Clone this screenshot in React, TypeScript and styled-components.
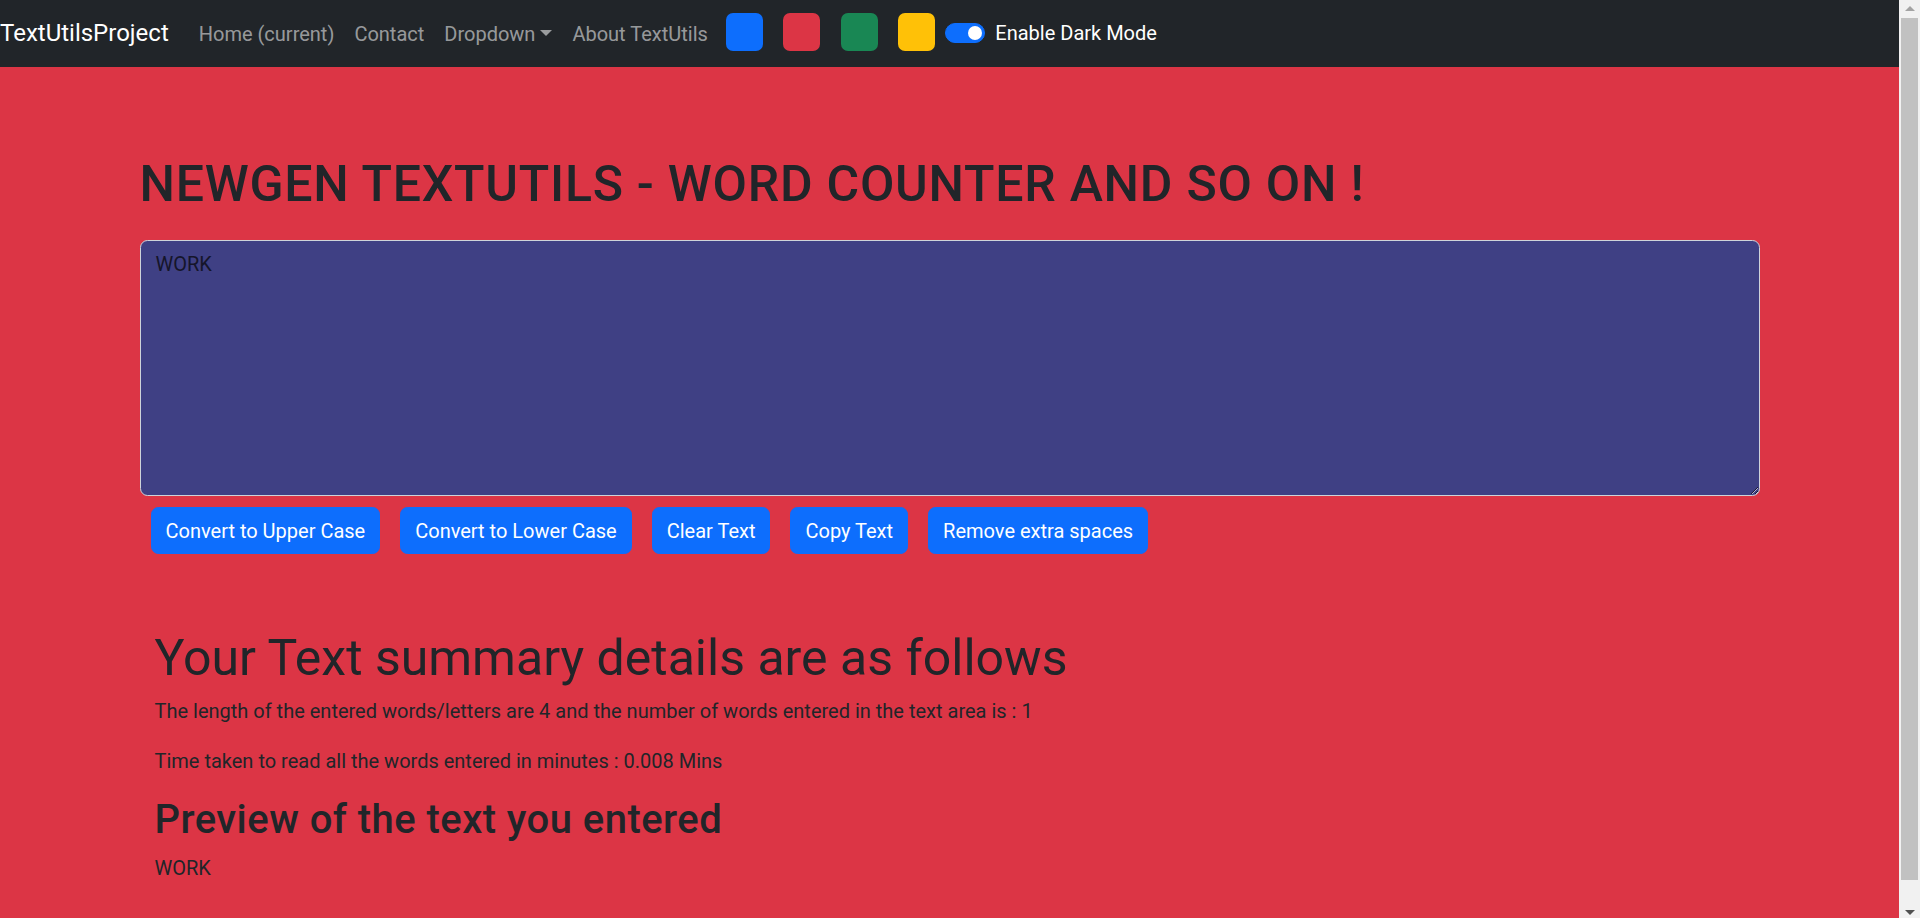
import React from "react";
import styled, { createGlobalStyle } from "styled-components";

const GlobalStyle = createGlobalStyle`
  html, body {
    margin: 0;
    padding: 0;
    height: 100%;
    overflow: hidden;
  }
  body {
    font-family: Roboto, "Liberation Sans", sans-serif;
    font-size: 20px;
    line-height: 30px;
    color: #212529;
  }
  #root {
    height: 100%;
  }
  * {
    box-sizing: border-box;
  }
`;

const Screen = styled.div`
  display: flex;
  height: 100vh;
  width: 100%;
`;

const Page = styled.div`
  flex: 1;
  display: flex;
  flex-direction: column;
  background: #dc3545;
  overflow: hidden;
`;

const Navbar = styled.nav`
  height: 67px;
  flex: none;
  display: flex;
  align-items: center;
  background: #212529;
`;

const Brand = styled.a`
  font-size: 24px;
  line-height: 36px;
  color: #fff;
  margin-right: 20px;
  text-decoration: none;
  margin-top: -1px;
`;

const NavList = styled.ul`
  display: flex;
  list-style: none;
  margin: 0;
  padding: 0;
`;

const NavLink = styled.li`
  padding: 0 10px;
  font-size: 20px;
  line-height: 30px;
  color: rgba(255, 255, 255, 0.55);
  white-space: nowrap;
  display: flex;
  align-items: center;
`;

const Caret = styled.span`
  display: inline-block;
  margin-left: 5px;
  margin-top: -2px;
  border-top: 6px solid rgba(255, 255, 255, 0.55);
  border-left: 6px solid transparent;
  border-right: 6px solid transparent;
  width: 0;
  height: 0;
`;

const Swatches = styled.div`
  display: flex;
  gap: 20.5px;
  margin-left: 8px;
  margin-bottom: 4px;
`;

const Swatch = styled.div<{ $color: string }>`
  width: 37px;
  height: 38px;
  border-radius: 7px;
  background: ${(p) => p.$color};
`;

const SwitchWrap = styled.label`
  display: flex;
  align-items: center;
  margin-left: 10px;
  gap: 10px;
  margin-bottom: 2px;
`;

const Toggle = styled.span`
  position: relative;
  width: 40px;
  height: 20px;
  border-radius: 10px;
  background: #0d6efd;
  border: 1px solid #0d6efd;
`;

const Knob = styled.span`
  position: absolute;
  right: 2px;
  top: 2px;
  width: 14px;
  height: 14px;
  border-radius: 50%;
  background: #fff;
`;

const SwitchLabel = styled.span`
  font-size: 20px;
  line-height: 30px;
  color: #fff;
`;

const Container = styled.main`
  width: 100%;
  max-width: 1650px;
  margin: 0 auto;
  padding: 87px 15px 0;
`;

const Title = styled.h1`
  margin: 0 0 26px;
  font-size: 50px;
  line-height: 60px;
  font-weight: 500;
  letter-spacing: 0.75px;
  color: #212529;
`;

const TextArea = styled.textarea`
  display: block;
  width: 100%;
  height: 256px;
  padding: 7.5px 15px;
  font-family: Roboto, "Liberation Sans", sans-serif;
  font-size: 20px;
  line-height: 30px;
  color: #15152a;
  background: #3f4084;
  border: 1.25px solid #ced4da;
  border-radius: 7.5px;
  outline: none;
  resize: vertical;
`;

const ButtonRow = styled.div`
  display: flex;
  gap: 20px;
  margin-top: 11px;
  padding-left: 11px;
`;

const ActionButton = styled.button`
  height: 47px;
  padding: 0 14px;
  font-family: Roboto, "Liberation Sans", sans-serif;
  font-size: 20px;
  line-height: 30px;
  color: #fff;
  background: #0d6efd;
  border: 1.25px solid #0d6efd;
  border-radius: 7.5px;
  cursor: pointer;
`;

const Summary = styled.section`
  margin-top: 74px;
  padding: 0 15px;
`;

const SummaryTitle = styled.h1`
  margin: 0 0 8px;
  font-size: 50px;
  line-height: 60px;
  font-weight: 400;
  color: #212529;
`;

const SubTitle = styled.h2`
  margin: 0 0 9px;
  font-size: 40px;
  line-height: 48px;
  font-weight: 500;
  letter-spacing: 0.45px;
  color: #212529;
`;

const Para = styled.p`
  margin: 0 0 20px;
  font-size: 20px;
  line-height: 30px;
`;

const Scrollbar = styled.div`
  width: 21px;
  flex: none;
  display: flex;
  flex-direction: column;
  align-items: center;
  background: #f1f1f1;
  padding: 0 2px;
`;

const ScrollArrow = styled.div<{ $down?: boolean }>`
  flex: none;
  height: 18px;
  width: 100%;
  display: flex;
  align-items: center;
  justify-content: center;
  &::before {
    content: "";
    width: 0;
    height: 0;
    border-left: 5px solid transparent;
    border-right: 5px solid transparent;
    ${(p) =>
      p.$down
        ? "border-top: 5px solid #505050; margin-top: 6px;"
        : "border-bottom: 5px solid #a3a3a3; margin-top: -2px;"}
  }
`;

const Thumb = styled.div`
  width: 100%;
  height: 862px;
  background: #c1c1c1;
`;

const Spacer = styled.div`
  flex: 1;
`;

const swatchColors = ["#0d6efd", "#dc3545", "#198754", "#ffc107"];
const actions = [
  "Convert to Upper Case",
  "Convert to Lower Case",
  "Clear Text",
  "Copy Text",
  "Remove extra spaces",
];

export default function App() {
  const text = "WORK";
  const words = text.split(/\s+/).filter((w) => w.length > 0).length;
  return (
    <>
      <GlobalStyle />
      <Screen>
        <Page>
          <Navbar>
            <Brand href="#">TextUtilsProject</Brand>
            <NavList>
              <NavLink>Home (current)</NavLink>
              <NavLink>Contact</NavLink>
              <NavLink>
                Dropdown
                <Caret />
              </NavLink>
              <NavLink>About TextUtils</NavLink>
            </NavList>
            <Swatches>
              {swatchColors.map((c) => (
                <Swatch key={c} $color={c} />
              ))}
            </Swatches>
            <SwitchWrap>
              <Toggle>
                <Knob />
              </Toggle>
              <SwitchLabel>Enable Dark Mode</SwitchLabel>
            </SwitchWrap>
          </Navbar>
          <Container>
            <Title>NEWGEN TEXTUTILS - WORD COUNTER AND SO ON !</Title>
            <TextArea rows={8} defaultValue={text} />
            <ButtonRow>
              {actions.map((a) => (
                <ActionButton key={a}>{a}</ActionButton>
              ))}
            </ButtonRow>
            <Summary>
              <SummaryTitle>Your Text summary details are as follows</SummaryTitle>
              <Para>
                The length of the entered words/letters are {text.length} and the number of words
                entered in the text area is : {words}
              </Para>
              <Para>Time taken to read all the words entered in minutes : {0.008 * words} Mins</Para>
              <SubTitle>Preview of the text you entered</SubTitle>
              <Para>{text}</Para>
            </Summary>
          </Container>
        </Page>
        <Scrollbar>
          <ScrollArrow />
          <Thumb />
          <Spacer />
          <ScrollArrow $down />
        </Scrollbar>
      </Screen>
    </>
  );
}
